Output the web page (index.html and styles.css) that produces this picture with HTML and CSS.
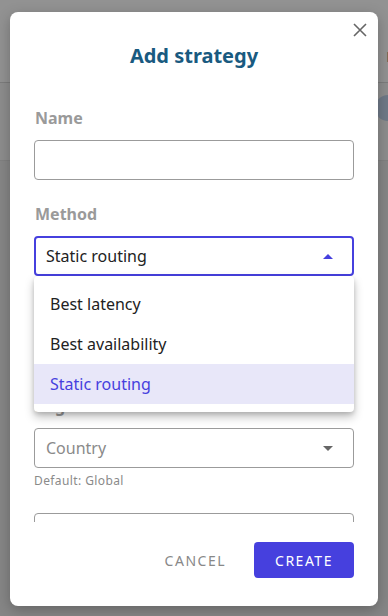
FILE: index.html
```html
<!DOCTYPE html>
<html lang="en">
<head>
    <meta charset="UTF-8">
    <meta name="viewport" content="width=device-width, initial-scale=1.0">
    <title>Add strategy</title>
    <link rel="stylesheet" href="styles.css">
</head>
<body>
    <div class="page">
        <header class="topbar">
            <span class="tab">E</span>
        </header>
        <div class="toolbar">
            <span class="avatar"></span>
        </div>
    </div>

    <div class="overlay">
        <div class="modal">
            <button class="close" type="button" aria-label="Close">
                <svg width="14" height="14" viewBox="0 0 14 14"><path d="M1 1L13 13M13 1L1 13" stroke="#666" stroke-width="1.6" fill="none"/></svg>
            </button>
            <h2>Add strategy</h2>

            <form class="form-body">
                <div class="field">
                    <label for="name">Name</label>
                    <input type="text" id="name" class="input-field">
                </div>

                <div class="field">
                    <label>Method</label>
                    <div class="select-wrap">
                        <div class="select active">
                            <span>Static routing</span>
                            <span class="caret up"></span>
                        </div>
                        <ul class="menu">
                            <li>Best latency</li>
                            <li>Best availability</li>
                            <li class="selected">Static routing</li>
                        </ul>
                    </div>
                </div>

                <div class="field">
                    <label>Server</label>
                    <div class="select"></div>
                </div>

                <div class="field">
                    <label>Region</label>
                    <div class="select">
                        <span class="placeholder">Country</span>
                        <span class="caret"></span>
                    </div>
                    <small class="hint">Default: Global</small>
                </div>

                <div class="field">
                    <input type="text" class="input-field">
                </div>
            </form>

            <div class="actions">
                <button type="button" class="btn btn-text">Cancel</button>
                <button type="submit" class="btn">Create</button>
            </div>
        </div>
    </div>
</body>
</html>
```

FILE: styles.css
```css
body {
    margin: 0;
    width: 388px;
    height: 616px;
    overflow: hidden;
    font-family: "Noto Sans", "Open Sans", sans-serif;
    background-color: #868686;
    position: relative;
}

.page {
    height: 100%;
}

.topbar {
    height: 82px;
    background-color: #929292;
    border-bottom: 1px solid #7c7c7c;
    display: flex;
    justify-content: flex-end;
    align-items: center;
}

.tab {
    font-weight: bold;
    font-size: 14px;
    color: #4a4a4a;
    margin-right: -6px;
    margin-top: 30px;
}

.toolbar {
    height: 77px;
    background-color: #8d8d8d;
    border-bottom: 1px solid #808080;
    display: flex;
    justify-content: flex-end;
    align-items: flex-start;
}

.avatar {
    width: 26px;
    height: 26px;
    border-radius: 50%;
    background-color: #6f7987;
    margin-top: 12px;
    margin-right: -13px;
}

.overlay {
    position: absolute;
    inset: 0;
    display: flex;
    justify-content: center;
    align-items: flex-start;
}

.modal {
    position: relative;
    width: 368px;
    height: 594px;
    margin-top: 12px;
    box-sizing: border-box;
    background-color: white;
    border-radius: 8px;
    box-shadow: 0 4px 14px rgba(0, 0, 0, 0.25);
    display: flex;
    flex-direction: column;
}

.close {
    position: absolute;
    top: 6px;
    right: 6px;
    width: 24px;
    height: 24px;
    padding: 0;
    border: none;
    background: none;
    display: flex;
    align-items: center;
    justify-content: center;
}

h2 {
    text-align: center;
    font-size: 20px;
    font-weight: bold;
    color: #195a80;
    margin: 30px 0 0;
    line-height: 28px;
}

.form-body {
    padding: 38px 24px 0;
    height: 452px;
    box-sizing: border-box;
    overflow: hidden;
    flex: none;
}

.field {
    margin-bottom: 24px;
}

label {
    display: block;
    font-weight: bold;
    font-size: 16px;
    color: #9a9a9a;
    line-height: 20px;
    margin: 0 0 12px 1px;
}

.input-field {
    display: block;
    width: 100%;
    box-sizing: border-box;
    height: 40px;
    border: 1px solid #9b9b9b;
    border-radius: 4px;
    outline: none;
    font-family: inherit;
    font-size: 16px;
}

.select-wrap {
    position: relative;
}

.select {
    height: 40px;
    box-sizing: border-box;
    border: 1px solid #9b9b9b;
    border-radius: 4px;
    padding: 0 20px 0 11px;
    display: flex;
    align-items: center;
    justify-content: space-between;
    font-size: 16px;
    color: #222;
}

.select.active {
    border: 2px solid #4640de;
    padding-left: 10px;
    padding-right: 19px;
}

.placeholder {
    color: #8a8a8a;
}

.caret {
    width: 0;
    height: 0;
    border-left: 5px solid transparent;
    border-right: 5px solid transparent;
    border-top: 5px solid #666;
}

.caret.up {
    border-top: none;
    border-bottom: 5px solid #4640de;
}

.menu {
    position: absolute;
    top: 100%;
    left: 0;
    right: 0;
    margin: 0;
    padding: 8px 0;
    list-style: none;
    background-color: white;
    border-radius: 4px;
    box-shadow: 0 5px 10px rgba(0, 0, 0, 0.25), 0 2px 4px rgba(0, 0, 0, 0.12);
    z-index: 2;
}

.menu li {
    height: 40px;
    line-height: 40px;
    padding-left: 16px;
    font-size: 16px;
    color: #222;
}

.menu li.selected {
    background-color: #e8e7f9;
    color: #4640de;
}

.hint {
    display: block;
    font-size: 12px;
    line-height: 16px;
    color: #8a8a8a;
    margin-top: 5px;
    letter-spacing: 0.4px;
}

.actions {
    display: flex;
    justify-content: flex-end;
    gap: 28px;
    padding: 0 24px;
    margin-top: 20px;
}

.btn {
    height: 36px;
    min-width: 100px;
    padding: 0 16px;
    background-color: #4640de;
    color: white;
    border: none;
    border-radius: 4px;
    font-family: inherit;
    font-size: 14px;
    letter-spacing: 1.5px;
    text-transform: uppercase;
}

.btn-text {
    background: none;
    color: #888;
    min-width: 0;
    padding: 0;
}
```
